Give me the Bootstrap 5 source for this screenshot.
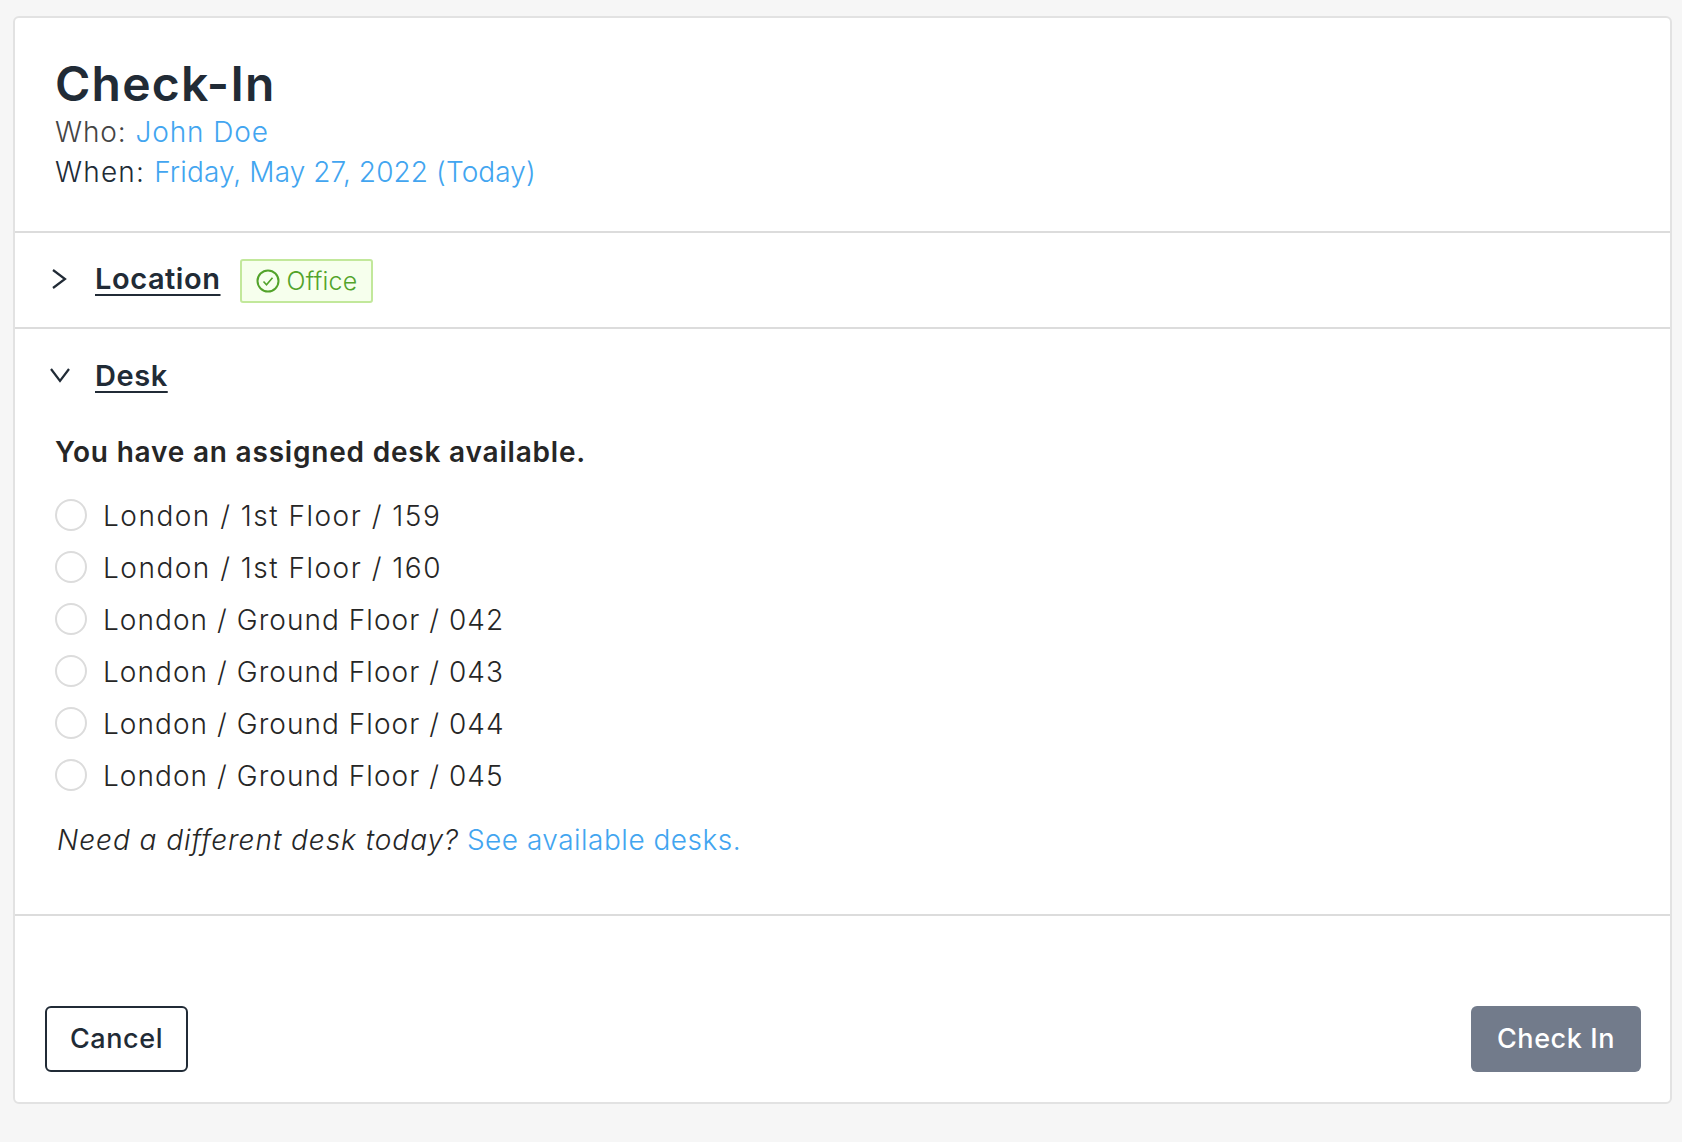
<!DOCTYPE html>
<html>

<head>
  <meta charset='utf-8'>
  <title>Check-In</title>
  <meta name='viewport' content='width=device-width, initial-scale=1'>
  <link rel="stylesheet" href="https://cdn.jsdelivr.net/npm/bootstrap@5.3.0/dist/css/bootstrap.min.css">
  <style>
    body { background: #f6f6f6; font-family: Inter, "Liberation Sans", sans-serif; font-weight: 300; color: #212b36; }
    .checkin-card { margin: 16px 10px 0 13px; height: 1088px; border: 2px solid #e2e2e2; border-radius: 6px; }
    .head-block { height: 215px; padding: 38px 40px 0; border-bottom: 2px solid #dcdcdc; }
    .head-block h1 { font-size: 48px; line-height: 56px; font-weight: 600; margin: 0; color: #212b36; letter-spacing: 1.2px; }
    .meta-line { font-size: 28px; line-height: 41px; letter-spacing: 1.2px; }
    .meta-line a { letter-spacing: .1px; }
    .meta-who { color: #444; letter-spacing: .9px; line-height: 40px; }
    .meta-who a { letter-spacing: .9px; }
    .blue-text { color: #42a5f0; text-decoration: none; }
    .location-block { height: 96px; padding: 0 40px 0 32px; border-bottom: 2px solid #dcdcdc; }
    .toggle-icon { width: 44px; flex: none; margin: 0 0 2px 4px; }
    .sect-title { font-size: 29px; font-weight: 600; color: #212b36; letter-spacing: .55px; margin-bottom: 3px; text-decoration: underline; text-underline-offset: 5px; text-decoration-thickness: 2px; }
    .office-tag { height: 44px; padding: 2px 13px 0 14px; margin: 2px 0 0 19px; gap: 7px; color: #52a32a; background: #f6ffed; border: 2px solid #c2e89b; border-radius: 3px; font-size: 25px; letter-spacing: .2px; }
    .office-tag svg { margin-top: -2px; }
    .desk-block { height: 587px; padding: 0 40px; border-bottom: 2px solid #dcdcdc; }
    .desk-top { height: 95px; margin: 0 0 8px -10px; padding-top: 1px; }
    .desk-top .toggle-icon { width: 46px; margin-bottom: 4px; }
    .desk-note { font-size: 28px; font-weight: 600; color: #262626; line-height: 40px; margin: 0 0 18px; letter-spacing: .8px; }
    .desk-row { height: 52px; margin: 0; padding: 0; gap: 16px; }
    .desk-row .form-check-input { width: 32px; height: 32px; margin: 0 0 2px; float: none; flex: none; border: 2px solid #dcdcdc; }
    .desk-row .form-check-label { font-size: 28px; color: #262626; letter-spacing: 1.05px; }
    .desk-row .label-wide { letter-spacing: 1.5px; }
    .other-desk { font-size: 28px; line-height: 40px; margin: 18px 0 0 2px; color: #262626; }
    .other-desk em { letter-spacing: .95px; }
    .other-desk a { letter-spacing: .5px; }
    .foot-block { flex: 1; padding: 0 29px 30px 30px; }
    .foot-block .btn { height: 66px; font-size: 27px; font-weight: 500; letter-spacing: .6px; border-radius: 6px; padding: 0; white-space: nowrap; }
    .foot-block .btn-cancel { width: 143px; color: #212b36; border: 2px solid #212b36; background: #fff; }
    .foot-block .btn-checkin { width: 170px; color: #fff; background: #727b8b; border: 0; }
  </style>
</head>

<body>
  <div class="card checkin-card">
    <div class="head-block">
      <h1>Check-In</h1>
      <div class="meta-line meta-who">Who: <a class="blue-text" href="#">John Doe</a></div>
      <div class="meta-line">When: <a class="blue-text" href="#">Friday, May 27, 2022 (Today)</a></div>
    </div>

    <div class="location-block d-flex align-items-center">
      <div class="toggle-icon">
        <svg class="d-block" width="16" height="22" viewBox="0 0 16 22" fill="none" stroke="#212b36" stroke-width="2.2">
          <path d="M2 2l12 9-12 9" />
        </svg>
      </div>
      <a class="sect-title" href="#">Location</a>
      <span class="office-tag d-inline-flex align-items-center">
        <svg width="24" height="24" viewBox="0 0 24 24" fill="none" stroke="#52a32a" stroke-width="2">
          <circle cx="12" cy="12" r="10.5" />
          <path d="M7.5 12.5l3 3.2 6-7" stroke-width="1.6" />
        </svg>
        Office
      </span>
    </div>

    <div class="desk-block">
      <div class="desk-top d-flex align-items-center">
        <div class="toggle-icon">
          <svg class="d-block" width="22" height="16" viewBox="0 0 22 16" fill="none" stroke="#212b36" stroke-width="2.2">
            <path d="M2 2l9 12 9-12" />
          </svg>
        </div>
        <a class="sect-title" href="#">Desk</a>
      </div>
      <p class="desk-note">You have an assigned desk available.</p>
      <div class="form-check desk-row d-flex align-items-center">
        <input class="form-check-input" type="radio" name="desk" id="d159">
        <label class="form-check-label label-wide" for="d159">London / 1st Floor / 159</label>
      </div>
      <div class="form-check desk-row d-flex align-items-center">
        <input class="form-check-input" type="radio" name="desk" id="d160">
        <label class="form-check-label label-wide" for="d160">London / 1st Floor / 160</label>
      </div>
      <div class="form-check desk-row d-flex align-items-center">
        <input class="form-check-input" type="radio" name="desk" id="d042">
        <label class="form-check-label" for="d042">London / Ground Floor / 042</label>
      </div>
      <div class="form-check desk-row d-flex align-items-center">
        <input class="form-check-input" type="radio" name="desk" id="d043">
        <label class="form-check-label" for="d043">London / Ground Floor / 043</label>
      </div>
      <div class="form-check desk-row d-flex align-items-center">
        <input class="form-check-input" type="radio" name="desk" id="d044">
        <label class="form-check-label" for="d044">London / Ground Floor / 044</label>
      </div>
      <div class="form-check desk-row d-flex align-items-center">
        <input class="form-check-input" type="radio" name="desk" id="d045">
        <label class="form-check-label" for="d045">London / Ground Floor / 045</label>
      </div>
      <p class="other-desk"><em>Need a different desk today?</em> <a class="blue-text" href="#">See available desks.</a></p>
    </div>

    <div class="foot-block d-flex justify-content-between align-items-end">
      <button type="button" class="btn btn-cancel">Cancel</button>
      <button type="button" class="btn btn-checkin">Check In</button>
    </div>
  </div>

  <script src="https://cdn.jsdelivr.net/npm/bootstrap@5.3.0/dist/js/bootstrap.bundle.min.js"></script>
</body>

</html>
